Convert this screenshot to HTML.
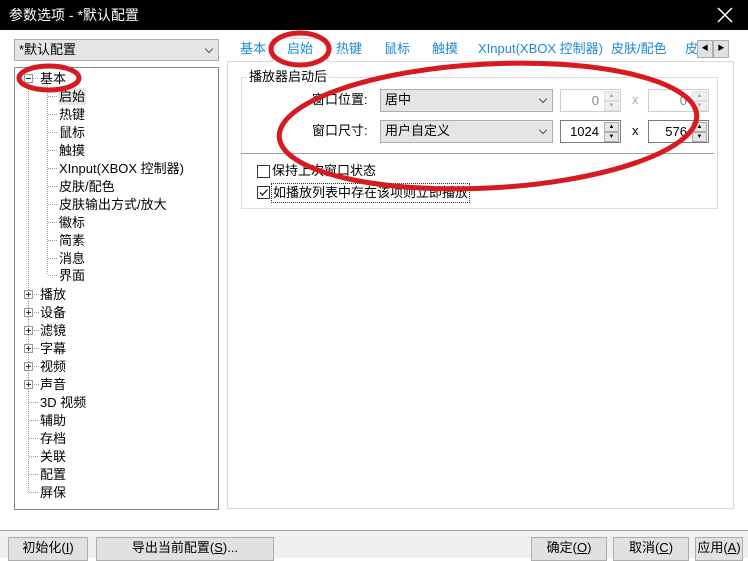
<!DOCTYPE html>
<html><head><meta charset="utf-8">
<style>
*{margin:0;padding:0;box-sizing:border-box}
body{width:748px;height:558px;overflow:hidden;background:#fff;font-family:"Liberation Sans","Noto Sans CJK SC",sans-serif;font-size:13px;color:#000;position:relative}
.a{position:absolute;white-space:nowrap}
.title{left:0;top:0;width:748px;height:30px;background:#000;color:#fff;font-size:14px;line-height:30px;padding-left:9px}
.sel{background:#e5e5e5;border:1px solid #adadad;height:22px;line-height:20px;padding-left:4px}
.chev{position:absolute;right:6px;top:6px;width:6px;height:6px;border-right:1px solid #555;border-bottom:1px solid #555;transform:rotate(45deg)}
.tree{left:14px;top:67px;width:205px;height:443px;border:1px solid #828790}
.tab{position:absolute;top:40px;color:#1e88d8;line-height:18px}
.spin{border:1px solid #7a7a7a;height:23px;background:#fff;text-align:right;padding-right:21px;line-height:21px}
.spin.dis{border-color:#ccc;color:#888}
.sb{position:absolute;right:1px;width:15px;height:10px;border:1px solid #adadad;background:#e5e5e5;display:block;font-size:6px;line-height:8px;text-align:center;padding:0;color:#000}
.dis .sb{border-color:#ddd;background:#f0f0f0;color:#aaa}
.btn{position:absolute;top:537px;height:24px;border:1px solid #adadad;background:#e1e1e1;text-align:center;line-height:20px}
.cb{position:absolute;width:13px;height:13px;border:1px solid #333;background:#fff}
</style></head><body>
<div class="a title">参数选项 - *默认配置</div>
<svg class="a" style="left:717px;top:7px" width="16" height="16"><path d="M1 1L15 15M15 1L1 15" stroke="#fff" stroke-width="1.5"/></svg>

<div class="a sel" style="left:14px;top:39px;width:205px">*默认配置<span class="chev"></span></div>

<div class="a tree"></div>

<!-- tabs -->
<div class="tab" style="left:240px">基本</div>
<div class="a" style="left:272px;top:38px;width:56px;height:24px;border:1px solid #d9d9d9;border-bottom:none;background:#fff"></div>
<div class="tab" style="left:287px">启始</div>
<div class="tab" style="left:336px">热键</div>
<div class="tab" style="left:384px">鼠标</div>
<div class="tab" style="left:432px">触摸</div>
<div class="tab" style="left:478px">XInput(XBOX 控制器)</div>
<div class="tab" style="left:611px">皮肤/配色</div>
<div class="tab" style="left:685px;width:12px;overflow:hidden">皮</div>
<div class="a" style="left:697px;top:40px;width:16px;height:18px;border:1px solid #adadad;background:#e1e1e1;font-size:7px;text-align:center;line-height:16px">◀</div>
<div class="a" style="left:713px;top:40px;width:16px;height:18px;border:1px solid #adadad;background:#e1e1e1;font-size:7px;text-align:center;line-height:16px">▶</div>

<div class="a" style="left:227px;top:61px;width:507px;height:448px;border:1px solid #d9d9d9"></div>
<div class="a" style="left:273px;top:60px;width:54px;height:2px;background:#fff"></div>

<!-- group -->
<div class="a" style="left:241px;top:77px;width:477px;height:132px;border:1px solid #dcdcdc"></div>
<div class="a" style="left:247px;top:68px;background:#fff;padding:0 2px;line-height:18px">播放器启动后</div>
<div class="a" style="left:312px;top:91px;line-height:18px">窗口位置:</div>
<div class="a sel" style="left:380px;top:89px;width:173px;height:23px">居中<span class="chev"></span></div>
<div class="a spin dis" style="left:560px;top:89px;width:61px">0<span class="sb" style="top:1px">▲</span><span class="sb" style="top:11px">▼</span></div>
<div class="a" style="left:632px;top:91px;color:#aaa;line-height:18px">x</div>
<div class="a spin dis" style="left:648px;top:89px;width:61px">0<span class="sb" style="top:1px">▲</span><span class="sb" style="top:11px">▼</span></div>

<div class="a" style="left:312px;top:122px;line-height:18px">窗口尺寸:</div>
<div class="a sel" style="left:380px;top:120px;width:173px;height:23px">用户自定义<span class="chev"></span></div>
<div class="a spin" style="left:560px;top:120px;width:61px">1024<span class="sb" style="top:1px">▲</span><span class="sb" style="top:11px">▼</span></div>
<div class="a" style="left:632px;top:122px;line-height:18px">x</div>
<div class="a spin" style="left:648px;top:120px;width:61px">576<span class="sb" style="top:1px">▲</span><span class="sb" style="top:11px">▼</span></div>

<div class="a" style="left:241px;top:153px;width:473px;height:1px;background:#a0a0a0"></div>
<div class="cb" style="left:257px;top:165px"></div>
<div class="a" style="left:272px;top:162px;line-height:18px">保持上次窗口状态</div>
<div class="cb" style="left:257px;top:186px"><svg width="11" height="11" style="position:absolute;left:0;top:0"><path d="M2 5.5 L4.5 8 L9.5 2.5" stroke="#222" fill="none" stroke-width="1.3"/></svg></div>
<div class="a" style="left:271px;top:183px;line-height:18px;border:1px dotted #333;padding:0 1px">如播放列表中存在该项则立即播放</div>

<!-- bottom bar -->
<div class="a" style="left:0;top:530px;width:748px;height:28px;background:#f0f0f0;border-top:1px solid #a0a0a0"></div>
<div class="btn" style="left:8px;width:80px">初始化(<u>I</u>)</div>
<div class="btn" style="left:96px;width:178px">导出当前配置(<u>S</u>)...</div>
<div class="btn" style="left:531px;width:76px">确定(<u>O</u>)</div>
<div class="btn" style="left:613px;width:76px">取消(<u>C</u>)</div>
<div class="btn" style="left:695px;width:48px">应用(<u>A</u>)</div>

<!-- tree items -->
<svg class="a" style="left:14px;top:67px" width="205" height="443" font-family="Liberation Sans, Noto Sans CJK SC, sans-serif" font-size="13">
<g stroke="#999" stroke-dasharray="1,1" fill="none">
<line x1="14.5" y1="16" x2="14.5" y2="425"/>
<line x1="33.5" y1="16" x2="33.5" y2="208"/>
<line x1="19" y1="11.5" x2="25" y2="11.5"/>
<line x1="34" y1="29.5" x2="44" y2="29.5"/><line x1="34" y1="47.5" x2="44" y2="47.5"/><line x1="34" y1="65.5" x2="44" y2="65.5"/><line x1="34" y1="83.5" x2="44" y2="83.5"/><line x1="34" y1="101.5" x2="44" y2="101.5"/><line x1="34" y1="119.5" x2="44" y2="119.5"/><line x1="34" y1="137.5" x2="44" y2="137.5"/><line x1="34" y1="155.5" x2="44" y2="155.5"/><line x1="34" y1="173.5" x2="44" y2="173.5"/><line x1="34" y1="191.5" x2="44" y2="191.5"/><line x1="34" y1="208.5" x2="44" y2="208.5"/>
<line x1="20" y1="227.5" x2="25" y2="227.5"/><line x1="20" y1="245.5" x2="25" y2="245.5"/><line x1="20" y1="263.5" x2="25" y2="263.5"/><line x1="20" y1="281.5" x2="25" y2="281.5"/><line x1="20" y1="299.5" x2="25" y2="299.5"/><line x1="20" y1="317.5" x2="25" y2="317.5"/>
<line x1="15" y1="335.5" x2="25" y2="335.5"/><line x1="15" y1="353.5" x2="25" y2="353.5"/><line x1="15" y1="371.5" x2="25" y2="371.5"/><line x1="15" y1="389.5" x2="25" y2="389.5"/><line x1="15" y1="407.5" x2="25" y2="407.5"/><line x1="15" y1="425.5" x2="25" y2="425.5"/>
</g>
<g fill="#fff" stroke="#999">
<rect x="10.5" y="7.5" width="8" height="8"/>
<rect x="10.5" y="223.5" width="8" height="8"/><rect x="10.5" y="241.5" width="8" height="8"/><rect x="10.5" y="259.5" width="8" height="8"/><rect x="10.5" y="277.5" width="8" height="8"/><rect x="10.5" y="295.5" width="8" height="8"/><rect x="10.5" y="313.5" width="8" height="8"/>
</g>
<g stroke="#333"><line x1="12" y1="11.5" x2="17" y2="11.5"/>
<path d="M12 227.5h5M14.5 225v5M12 245.5h5M14.5 243v5M12 263.5h5M14.5 261v5M12 281.5h5M14.5 279v5M12 299.5h5M14.5 297v5M12 317.5h5M14.5 315v5"/></g>
<rect x="44" y="21" width="28" height="17" fill="#e8e8e8"/>
<g fill="#000">
<text x="26" y="16">基本</text>
<text x="45" y="34">启始</text><text x="45" y="52">热键</text><text x="45" y="70">鼠标</text><text x="45" y="88">触摸</text>
<text x="45" y="106">XInput(XBOX 控制器)</text><text x="45" y="124">皮肤/配色</text><text x="45" y="142">皮肤输出方式/放大</text>
<text x="45" y="160">徽标</text><text x="45" y="178">简素</text><text x="45" y="196">消息</text><text x="45" y="213">界面</text>
<text x="26" y="232">播放</text><text x="26" y="250">设备</text><text x="26" y="268">滤镜</text><text x="26" y="286">字幕</text><text x="26" y="304">视频</text><text x="26" y="322">声音</text>
<text x="26" y="340">3D 视频</text><text x="26" y="358">辅助</text><text x="26" y="376">存档</text><text x="26" y="394">关联</text><text x="26" y="412">配置</text><text x="26" y="430">屏保</text>
</g>
</svg>

<!-- red annotations -->
<svg class="a" style="left:0;top:0" width="748" height="558">
<g fill="none" stroke="#d71920" stroke-width="5">
<ellipse cx="49" cy="78" rx="30" ry="12"/>
<ellipse cx="300" cy="49" rx="29" ry="16"/>
<ellipse cx="488" cy="126" rx="209" ry="62" transform="rotate(-3 488 126)"/>
</g>
</svg>
</body></html>
